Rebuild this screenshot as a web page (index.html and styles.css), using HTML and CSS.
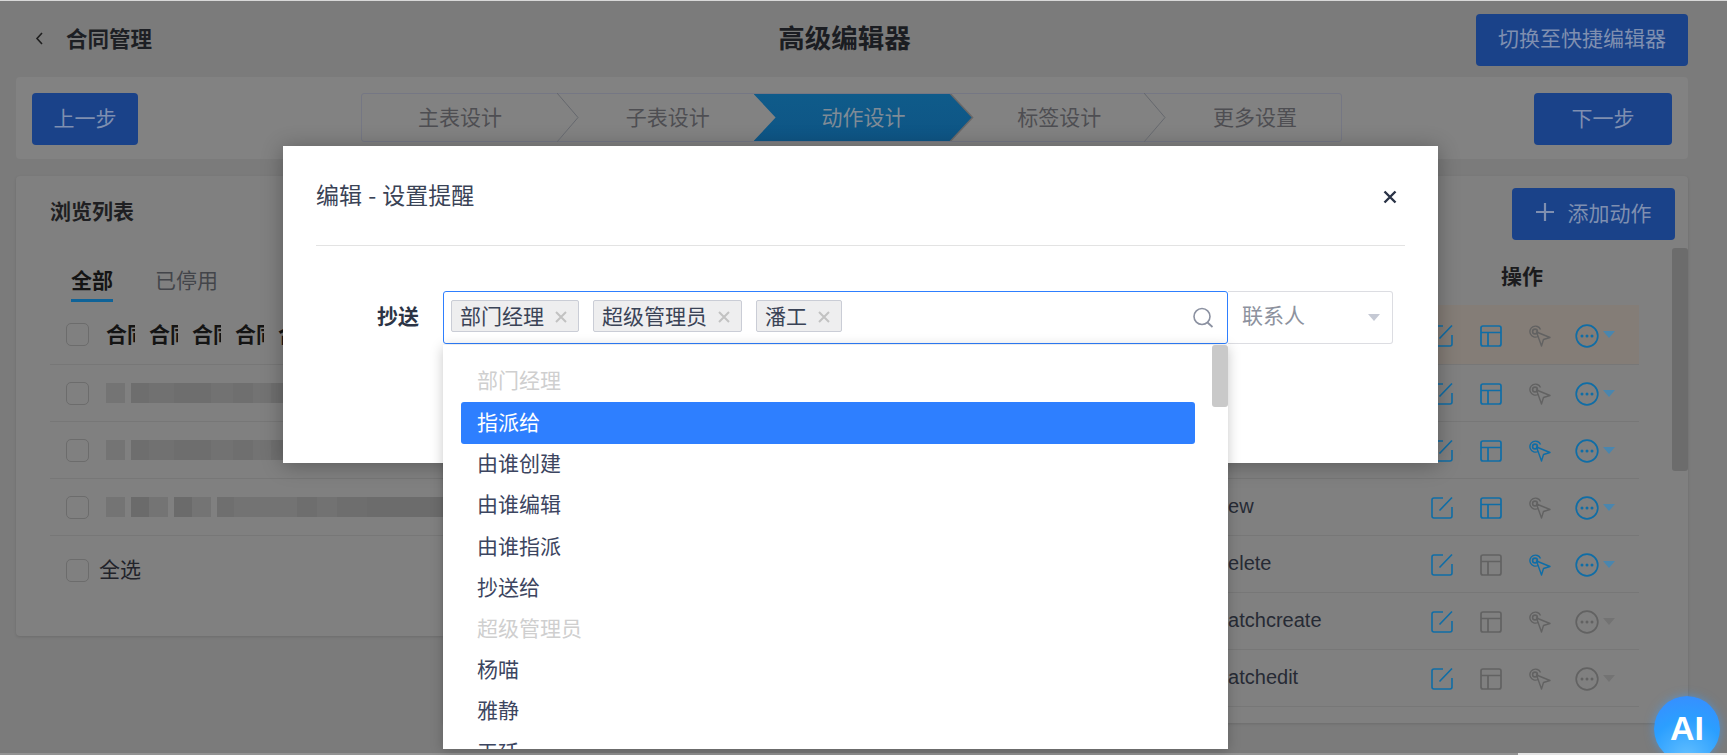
FILE: index.html
```html
<!DOCTYPE html>
<html lang="zh-CN">
<head>
    <meta charset="UTF-8">
    <title>高级编辑器</title>
    <link rel="stylesheet" href="styles.css">
</head>
<body>
    <svg class="defs" width="0" height="0">
        <symbol id="i-edit" viewBox="0 0 22 22">
            <path d="M12 1H3a2 2 0 0 0-2 2V19a2 2 0 0 0 2 2H19a2 2 0 0 0 2-2V10M21 0.500L8.500 13.500" fill="none" stroke="currentColor" stroke-width="1.600"/>
        </symbol>
        <symbol id="i-layout" viewBox="0 0 22 22">
            <rect x="1" y="1" width="20" height="20" rx="2" fill="none" stroke="currentColor" stroke-width="1.700"/>
            <path d="M1 7.500H21M8 7.500V21" fill="none" stroke="currentColor" stroke-width="1.700"/>
        </symbol>
        <symbol id="i-target" viewBox="0 0 22 22">
            <path d="M9 11.500A5.500 5.500 0 1 1 11.500 4.500" fill="none" stroke="currentColor" stroke-width="1.400"/>
            <circle cx="6" cy="6.500" r="2.400" fill="none" stroke="currentColor" stroke-width="1.600"/>
            <path d="M7.500 7L21 12.500L14.500 14.500L12.500 21Z" fill="none" stroke="currentColor" stroke-width="1.400" stroke-linejoin="round"/>
        </symbol>
        <symbol id="i-more" viewBox="0 0 24 24">
            <circle cx="12" cy="12" r="10.800" fill="none" stroke="currentColor" stroke-width="1.700"/>
            <circle cx="7" cy="12" r="1.500" fill="currentColor"/>
            <circle cx="12" cy="12" r="1.500" fill="currentColor"/>
            <circle cx="17" cy="12" r="1.500" fill="currentColor"/>
        </symbol>
    </svg>

    <div class="topline"></div>

    <div class="page">
        <div class="head">
            <div class="head-left">
                <svg class="back" width="9" height="13" viewBox="0 0 9 13"><path d="M7 1L2 6.500L7 12" fill="none" stroke="#1f1f1f" stroke-width="1.600"/></svg>
                <span class="head-name">合同管理</span>
            </div>
            <div class="head-title">高级编辑器</div>
            <button class="btn btn-switch">切换至快捷编辑器</button>
        </div>

        <div class="stepbar">
            <button class="btn btn-prev">上一步</button>
            <div class="steps">
                <div class="step">主表设计<svg class="step-arrow" viewBox="0 0 22 49"><polyline points="0,0 21,24.500 0,49" /></svg></div>
                <div class="step">子表设计</div>
                <div class="step active"><span>动作设计</span></div>
                <div class="step">标签设计<svg class="step-arrow" viewBox="0 0 22 49"><polyline points="0,0 21,24.500 0,49" /></svg></div>
                <div class="step">更多设置</div>
            </div>
            <button class="btn btn-next">下一步</button>
        </div>

        <div class="panel">
            <div class="panel-left">
                <div class="panel-title">浏览列表</div>
                <div class="tabs">
                    <div class="tab on">全部</div>
                    <div class="tab">已停用</div>
                </div>
                <div class="lrow first">
                    <span class="check"></span>
                    <span class="th">合同</span><span class="th">合同</span><span class="th">合同</span><span class="th">合同</span><span class="th">合同</span><span class="th">合同</span><span class="th">合同</span>
                </div>
                <div class="lrow">
                    <span class="check"></span>
                    <span class="mosaic m-short"></span><span class="mosaic m-long"></span>
                </div>
                <div class="lrow">
                    <span class="check"></span>
                    <span class="mosaic m-short"></span><span class="mosaic m-long"></span>
                </div>
                <div class="lrow">
                    <span class="check"></span>
                    <span class="mosaic m-short"></span><span class="mosaic m-pair"></span><span class="mosaic m-pair"></span><span class="mosaic m-rest"></span>
                </div>
                <div class="lrow last">
                    <span class="check"></span>
                    <span class="all-label">全选</span>
                </div>
            </div>

            <div class="panel-right">
                <div class="action-bar">
                    <button class="btn btn-add"><svg width="18" height="18" viewBox="0 0 18 18"><path d="M9 0V18M0 9H18" stroke="#7f8fb0" stroke-width="2.200"/></svg>添加动作</button>
                </div>
                <div class="op-title">操作</div>

                <div class="rrow tint">
                    <span class="act-name"></span>
                    <span class="acts">
                        <svg class="blue"><use href="#i-edit"/></svg><svg class="blue"><use href="#i-layout"/></svg><svg class="grey"><use href="#i-target"/></svg><svg class="blue more"><use href="#i-more"/></svg><i class="caret blue-c"></i>
                    </span>
                </div>
                <div class="rrow">
                    <span class="act-name"></span>
                    <span class="acts">
                        <svg class="blue"><use href="#i-edit"/></svg><svg class="blue"><use href="#i-layout"/></svg><svg class="grey"><use href="#i-target"/></svg><svg class="blue more"><use href="#i-more"/></svg><i class="caret blue-c"></i>
                    </span>
                </div>
                <div class="rrow">
                    <span class="act-name"></span>
                    <span class="acts">
                        <svg class="blue"><use href="#i-edit"/></svg><svg class="blue"><use href="#i-layout"/></svg><svg class="blue"><use href="#i-target"/></svg><svg class="blue more"><use href="#i-more"/></svg><i class="caret blue-c"></i>
                    </span>
                </div>
                <div class="rrow">
                    <span class="act-name">new</span>
                    <span class="acts">
                        <svg class="blue"><use href="#i-edit"/></svg><svg class="blue"><use href="#i-layout"/></svg><svg class="grey"><use href="#i-target"/></svg><svg class="blue more"><use href="#i-more"/></svg><i class="caret blue-c"></i>
                    </span>
                </div>
                <div class="rrow">
                    <span class="act-name">delete</span>
                    <span class="acts">
                        <svg class="blue"><use href="#i-edit"/></svg><svg class="grey"><use href="#i-layout"/></svg><svg class="blue"><use href="#i-target"/></svg><svg class="blue more"><use href="#i-more"/></svg><i class="caret blue-c"></i>
                    </span>
                </div>
                <div class="rrow">
                    <span class="act-name">batchcreate</span>
                    <span class="acts">
                        <svg class="blue"><use href="#i-edit"/></svg><svg class="grey"><use href="#i-layout"/></svg><svg class="grey"><use href="#i-target"/></svg><svg class="grey more"><use href="#i-more"/></svg><i class="caret grey-c"></i>
                    </span>
                </div>
                <div class="rrow">
                    <span class="act-name">batchedit</span>
                    <span class="acts">
                        <svg class="blue"><use href="#i-edit"/></svg><svg class="grey"><use href="#i-layout"/></svg><svg class="grey"><use href="#i-target"/></svg><svg class="grey more"><use href="#i-more"/></svg><i class="caret grey-c"></i>
                    </span>
                </div>

                <div class="page-scroll"></div>
            </div>
        </div>
    </div>

    <div class="modal">
        <div class="modal-head">
            <div class="modal-title">编辑 - 设置提醒</div>
            <svg class="modal-close" width="14" height="14" viewBox="0 0 14 14"><path d="M1.500 1.500L12.500 12.500M12.500 1.500L1.500 12.500" stroke="#2a3346" stroke-width="2.400"/></svg>
        </div>
        <div class="form-row">
            <label class="form-label">抄送</label>
            <div class="picker">
                <span class="tag">部门经理<svg class="tag-x" viewBox="0 0 12 12"><path d="M1 1L11 11M11 1L1 11"/></svg></span>
                <span class="tag">超级管理员<svg class="tag-x" viewBox="0 0 12 12"><path d="M1 1L11 11M11 1L1 11"/></svg></span>
                <span class="tag">潘工<svg class="tag-x" viewBox="0 0 12 12"><path d="M1 1L11 11M11 1L1 11"/></svg></span>
                <svg class="search" width="22" height="21" viewBox="0 0 22 21"><circle cx="10" cy="9.500" r="8" fill="none" stroke="#8b91a1" stroke-width="1.600"/><path d="M15.500 15.500L20.500 20" stroke="#8b91a1" stroke-width="1.800"/></svg>
                <div class="dropdown">
                    <div class="scroll-thumb"></div>
                    <div class="opt group">部门经理</div>
                    <div class="opt selected">指派给</div>
                    <div class="opt">由谁创建</div>
                    <div class="opt">由谁编辑</div>
                    <div class="opt">由谁指派</div>
                    <div class="opt">抄送给</div>
                    <div class="opt group">超级管理员</div>
                    <div class="opt">杨喵</div>
                    <div class="opt">雅静</div>
                    <div class="opt">王廷</div>
                </div>
            </div>
            <div class="contact">联系人<i class="contact-caret"></i></div>
        </div>
    </div>

    <div class="ai-btn">AI</div>
    <div class="bottomline"></div>
</body>
</html>
```

FILE: styles.css
```css
* {
    box-sizing: border-box;
}
html, body {
    height: 755px;
    margin: 0;
    overflow: hidden;
}
body {
    background-color: #7b7b7b;
    color: #1c1c1c;
    font-family: "Noto Sans CJK SC", "Noto Sans", sans-serif;
    font-size: 21px;
    position: relative;
}
.defs {
    position: absolute;
}
.topline {
    height: 1px;
    background-color: #d8d8d8;
}
.bottomline {
    position: absolute;
    left: 0;
    right: 0;
    bottom: 0;
    height: 2px;
    background: linear-gradient(90deg, #939393 1518px, #e4e4e4 1518px);
}
.page {
    padding: 13px 39px 0 16px;
}

/* top header */
.head {
    display: flex;
    align-items: center;
    justify-content: space-between;
    height: 52px;
    margin-bottom: 11px;
    padding-left: 16px;
}
.head-left {
    display: flex;
    align-items: center;
    width: 181px;
}
.back {
    margin: -3px 22px 0 3px;
}
.head-name {
    font-size: 21.500px;
    font-weight: 700;
    color: #1d1f24;
    position: relative;
    top: -3px;
}
.head-title {
    font-size: 26.500px;
    font-weight: 700;
    color: #1b1d22;
    position: relative;
    top: -4px;
}
.btn {
    border: none;
    border-radius: 4px;
    background-color: #1a4289;
    color: #7f8fb0;
    font-family: inherit;
    font-size: 21px;
    height: 52px;
    padding: 0 0 4px;
}
.btn-switch {
    width: 212px;
    padding-bottom: 6px;
}
.btn-prev {
    width: 106px;
}
.btn-next {
    width: 138px;
    margin-left: auto;
}
.btn-add {
    width: 163px;
    display: flex;
    align-items: center;
    justify-content: center;
    gap: 14px;
}

/* step bar */
.stepbar {
    display: flex;
    align-items: flex-start;
    height: 82px;
    padding: 16px;
    background-color: #828282;
    border-radius: 4px;
    margin-bottom: 17px;
}
.steps {
    display: flex;
    width: 981px;
    height: 49px;
    margin-left: 223px;
    border: 1px solid #757784;
    border-radius: 3px;
}
.step {
    flex: 0 0 20%;
    position: relative;
    padding-left: 24px;
    text-align: center;
    line-height: 44px;
    color: #4e4e52;
}
.step:first-child {
    padding-left: 0;
}
.step-arrow {
    position: absolute;
    top: -1px;
    right: -21px;
    width: 22px;
    height: 49px;
    z-index: 1;
}
.step-arrow polyline {
    fill: none;
    stroke: #66686e;
    stroke-width: 1;
}
.step.active {
    color: #7f8b96;
}
.step.active::before,
.step.active::after {
    content: "";
    position: absolute;
    top: 0;
    bottom: 0;
    width: 218px;
}
.step.active::before {
    left: 2px;
    background-color: #6a6868;
    clip-path: polygon(190px 0, 196px 0, 218px 50%, 196px 100%, 190px 100%, 212px 50%);
}
.step.active::after {
    left: 0;
    background: linear-gradient(180deg, #0f5b8a, #0e5585);
    clip-path: polygon(0 0, 196px 0, 218px 50%, 196px 100%, 0 100%, 22px 50%);
}
.step.active span {
    position: relative;
    z-index: 1;
}

/* list panel */
.panel {
    display: flex;
    align-items: flex-start;
}
.panel-left {
    width: 427px;
    height: 460px;
    padding-left: 34px;
    background-color: #808080;
    border-radius: 4px 0 0 4px;
    box-shadow: 0 1px 3px rgba(0, 0, 0, 0.12);
}
.panel-title {
    height: 72px;
    line-height: 68px;
    font-weight: 700;
    color: #1f1f22;
}
.tabs {
    display: flex;
    gap: 42px;
    height: 54px;
    padding-left: 21px;
    margin-bottom: 3px;
}
.tab {
    height: 54px;
    line-height: 62px;
    color: #43454a;
}
.tab.on {
    color: #141414;
    font-weight: 700;
    border-bottom: 3px solid #0f6398;
}
.lrow {
    display: flex;
    align-items: center;
    height: 57px;
    padding-left: 16px;
    border-bottom: 1px solid #777;
}
.lrow.first {
    height: 60px;
}
.lrow.last {
    height: 68px;
    border-bottom: none;
}
.check {
    flex: none;
    width: 23px;
    height: 23px;
    margin-right: 17px;
    border: 1px solid #6c6c6c;
    border-radius: 5px;
}
.last .check {
    margin-right: 10px;
}
.all-label {
    position: relative;
    top: -2px;
    color: #22232a;
}
.th {
    flex: none;
    width: 29px;
    margin-right: 14px;
    overflow: hidden;
    white-space: nowrap;
    font-weight: 700;
    color: #141414;
    position: relative;
    top: -2px;
}
.mosaic {
    flex: none;
    height: 20px;
    margin-right: 6px;
}
.m-short {
    width: 19px;
    background-color: #747474;
}
.m-long {
    width: 299px;
    background: linear-gradient(90deg, #6e6e6e 18px, #717171 18px 43px, #6e6e6e 43px 80px, #727272 80px 102px, #6f6f6f 102px 122px, #737373 122px 140px, #6f6f6f 140px);
}
.m-pair {
    width: 37px;
    background: linear-gradient(90deg, #6b6b6b 18px, #747474 18px);
}
.m-rest {
    width: 226px;
    background: linear-gradient(90deg, #6f6f6f 17px, #737373 17px 80px, #6e6e6e 80px 100px, #727272 100px 120px, #6e6e6e 120px 150px, #6c6c6c 150px);
}

.panel-right {
    flex: 1;
    position: relative;
    height: 547px;
    padding-top: 12px;
    background-color: #808080;
    border-radius: 0 4px 4px 0;
    box-shadow: 0 1px 3px rgba(0, 0, 0, 0.12);
}
.action-bar {
    display: flex;
    justify-content: flex-end;
    padding-right: 13px;
}
.op-title {
    height: 65px;
    padding: 19px 0 0 1058px;
    line-height: 32px;
    font-weight: 700;
    color: #1b1b1d;
}
.rrow {
    display: flex;
    align-items: center;
    height: 57px;
    padding-top: 2px;
    margin-right: 49px;
    border-bottom: 1px solid #777;
}
.rrow.tint {
    height: 60px;
    background-color: #847d77;
}
.act-name {
    flex: none;
    width: 988px;
    padding-left: 774px;
    font-family: "Liberation Sans", sans-serif;
    font-size: 20px;
    color: #262a34;
    position: relative;
    top: -2px;
}
.acts {
    display: flex;
    align-items: center;
    gap: 27px;
}
.acts svg {
    width: 22px;
    height: 22px;
}
.acts svg.more {
    width: 24px;
    height: 24px;
    margin-left: -3px;
}
.blue {
    color: #0f6da6;
}
.grey {
    color: #626262;
}
.caret {
    width: 0;
    height: 0;
    margin: -2px 0 0 -23px;
    border-left: 6px solid transparent;
    border-right: 6px solid transparent;
    border-top: 7px solid;
}
.blue-c {
    color: #4a86ae;
}
.grey-c {
    color: #737373;
}
.page-scroll {
    position: absolute;
    top: 72px;
    right: 0;
    width: 16px;
    height: 223px;
    background-color: #6c6c6c;
    border-radius: 3px;
}

/* dialog */
.modal {
    position: absolute;
    top: 146px;
    left: 283px;
    width: 1155px;
    height: 317px;
    padding: 0 33px;
    background-color: #fff;
    box-shadow: 0 2px 20px rgba(0, 0, 0, 0.3);
    color: #3a4356;
}
.modal-head {
    display: flex;
    align-items: center;
    justify-content: space-between;
    height: 100px;
    padding-right: 8px;
    border-bottom: 1px solid #e3e3e3;
}
.modal-title {
    font-size: 23px;
    word-spacing: 1px;
    position: relative;
    top: -2px;
}
.modal-close {
    position: relative;
    top: 1px;
}
.form-row {
    display: flex;
    margin-top: 45px;
}
.form-label {
    width: 103px;
    margin-right: 24px;
    text-align: right;
    line-height: 48px;
    font-weight: 700;
    color: #2c3445;
}
.picker {
    position: relative;
    display: flex;
    gap: 14px;
    width: 785px;
    height: 53px;
    padding: 8px 7px;
    border: 1px solid #2e7fff;
    border-radius: 3px;
}
.tag {
    display: flex;
    align-items: center;
    height: 32px;
    padding: 0 11px 3px 8px;
    border: 1px solid #cacdd6;
    border-radius: 2px;
    background-color: #eeeeef;
    line-height: 28px;
    white-space: nowrap;
}
.tag-x {
    width: 12px;
    height: 12px;
    margin-left: 11px;
    position: relative;
    top: 2px;
}
.tag-x path {
    fill: none;
    stroke: #c2c2c2;
    stroke-width: 2;
}
.search {
    position: absolute;
    top: 15px;
    right: 13px;
}
.dropdown {
    position: absolute;
    top: 53px;
    left: -1px;
    width: 785px;
    height: 404px;
    padding: 16px 33px 0 18px;
    overflow: hidden;
    background-color: #fff;
    box-shadow: 0 2px 12px rgba(0, 0, 0, 0.22);
    z-index: 2;
}
.opt {
    height: 41.200px;
    padding-left: 16px;
    line-height: 36px;
    color: #3c4560;
}
.opt.group {
    color: #cfcfcf;
}
.opt.selected {
    height: 42px;
    line-height: 38px;
    border-radius: 3px;
    background-color: #2e7fff;
    color: #fff;
}
.scroll-thumb {
    position: absolute;
    top: 0;
    right: 0;
    width: 16px;
    height: 62px;
    background-color: #c9c9c9;
    border-radius: 3px;
}
.contact {
    position: relative;
    width: 165px;
    height: 53px;
    padding-left: 14px;
    line-height: 44px;
    border: 1px solid #dcdde2;
    border-left: none;
    border-radius: 0 3px 3px 0;
    color: #8d929e;
}
.contact-caret {
    position: absolute;
    top: 22px;
    right: 12px;
    width: 0;
    height: 0;
    border-left: 6px solid transparent;
    border-right: 6px solid transparent;
    border-top: 7px solid #c5c9d4;
}

.ai-btn {
    position: absolute;
    top: 696px;
    left: 1654px;
    width: 66px;
    height: 66px;
    border-radius: 50%;
    background: radial-gradient(circle at 50% 95%, #62bfff, #2b9fff 55%, #3a8aff 100%);
    box-shadow: 0 0 10px rgba(60, 160, 255, 0.55);
    color: #fff;
    font-family: "Liberation Sans", sans-serif;
    font-size: 34px;
    font-weight: 700;
    text-align: center;
    line-height: 64px;
}
```
